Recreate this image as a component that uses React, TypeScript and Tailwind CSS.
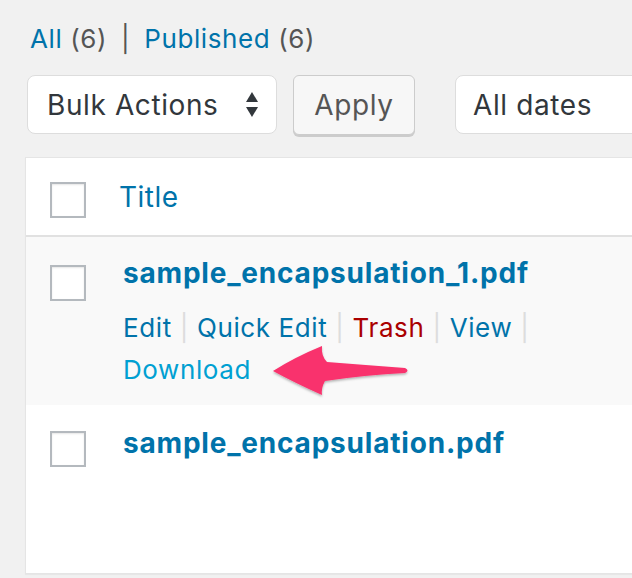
import React from 'react';

const font = "font-['Inter','Liberation_Sans',sans-serif]";

const Checkbox: React.FC = () => (
  <div className="w-[36px] h-[36px] border-2 border-[#b4b9be] bg-white shadow-[inset_0_1px_2px_rgba(0,0,0,0.1)]" />
);

const Sep: React.FC = () => <span className="text-[#ddd] mx-[8px]">|</span>;

const Arrow: React.FC = () => (
  <svg className="absolute left-[265px] top-[340px]" width="150" height="62" viewBox="0 0 150 62">
    <defs>
      <filter id="sh" x="-10%" y="-20%" width="120%" height="150%">
        <feDropShadow dx="0" dy="1.5" stdDeviation="1.2" floodColor="#000" floodOpacity="0.3" />
      </filter>
    </defs>
    <path
      d="M8,31 Q30,17 57,6 Q56,16 62,22 Q100,25 140,28 Q145,30.5 140,33 Q100,35 60,41 Q56,48 57,55 Q30,43 8,31 Z"
      fill="#f9326d"
      filter="url(#sh)"
    />
  </svg>
);

export default function App() {
  return (
    <div className={`relative w-[632px] h-[578px] overflow-hidden bg-[#f1f1f1] ${font}`}>
      {/* status filters */}
      <div className="pl-[30px] pt-[21px] text-[26px] leading-[36px] tracking-[0.6px] text-[#555]">
        <span className="text-[#0073aa]">All</span> (6) <span className="mx-[6px] text-[#555]">|</span>{' '}
        <span className="text-[#0073aa]">Published</span> (6)
      </div>

      {/* toolbar */}
      <div className="flex items-start pl-[27px] mt-[18px]">
        <div className="shrink-0 w-[250px] h-[59px] flex items-center justify-between pl-[19px] pr-[17px] bg-white border border-[#ddd] rounded-[8px] text-[28px] tracking-[0.6px] text-[#32373c]">
          <span>Bulk Actions</span>
          <svg width="14" height="28" viewBox="0 0 14 28">
            <path d="M7,1 L13,11 L1,11 Z" fill="#32373c" />
            <path d="M1,16 L13,16 L7,26 Z" fill="#32373c" />
          </svg>
        </div>
        <div className="shrink-0 ml-[16px] w-[122px] h-[60px] flex items-center justify-center bg-[#f7f7f7] border border-[#ccc] rounded-[6px] shadow-[0_2px_0_#ccc] text-[28px] tracking-[0.6px] text-[#555]">
          Apply
        </div>
        <div className="shrink-0 ml-[40px] w-[220px] h-[59px] flex items-center pl-[17px] bg-white border border-[#ddd] rounded-[8px] text-[28px] tracking-[0.6px] text-[#32373c]">
          All dates
        </div>
      </div>

      {/* table */}
      <div className="ml-[25px] mt-[22px] w-[640px] border border-[#e5e5e5] bg-white shadow-[0_1px_1px_rgba(0,0,0,0.04)]">
        <div className="h-[79px] flex items-start border-b-2 border-[#e1e1e1]">
          <div className="pl-[24px] pt-[24px]">
            <Checkbox />
          </div>
          <div className="pl-[33px] pt-[21px] text-[28px] leading-[36px] tracking-[0.5px] text-[#0073aa]">Title</div>
        </div>

        <div className="h-[168px] flex items-start bg-[#f9f9f9]">
          <div className="pl-[24px] pt-[28px]">
            <Checkbox />
          </div>
          <div className="pl-[37px] pt-[18px]">
            <div className="text-[28px] leading-[36px] font-bold tracking-[0.8px] text-[#0073aa]">sample_encapsulation_1.pdf</div>
            <div className="mt-[16px] text-[26px] leading-[42px] tracking-[0.6px] text-[#0073aa]">
              <span>Edit</span>
              <Sep />
              <span>Quick Edit</span>
              <Sep />
              <span className="text-[#a00]">Trash</span>
              <Sep />
              <span>View</span>
              <Sep />
              <br />
              <span className="text-[#00a0d2]">Download</span>
            </div>
          </div>
        </div>

        <div className="h-[168px] flex items-start">
          <div className="pl-[24px] pt-[26px]">
            <Checkbox />
          </div>
          <div className="pl-[37px] pt-[20px]">
            <div className="text-[28px] leading-[36px] font-bold tracking-[0.8px] text-[#0073aa]">sample_encapsulation.pdf</div>
          </div>
        </div>
      </div>

      <Arrow />
    </div>
  );
}
